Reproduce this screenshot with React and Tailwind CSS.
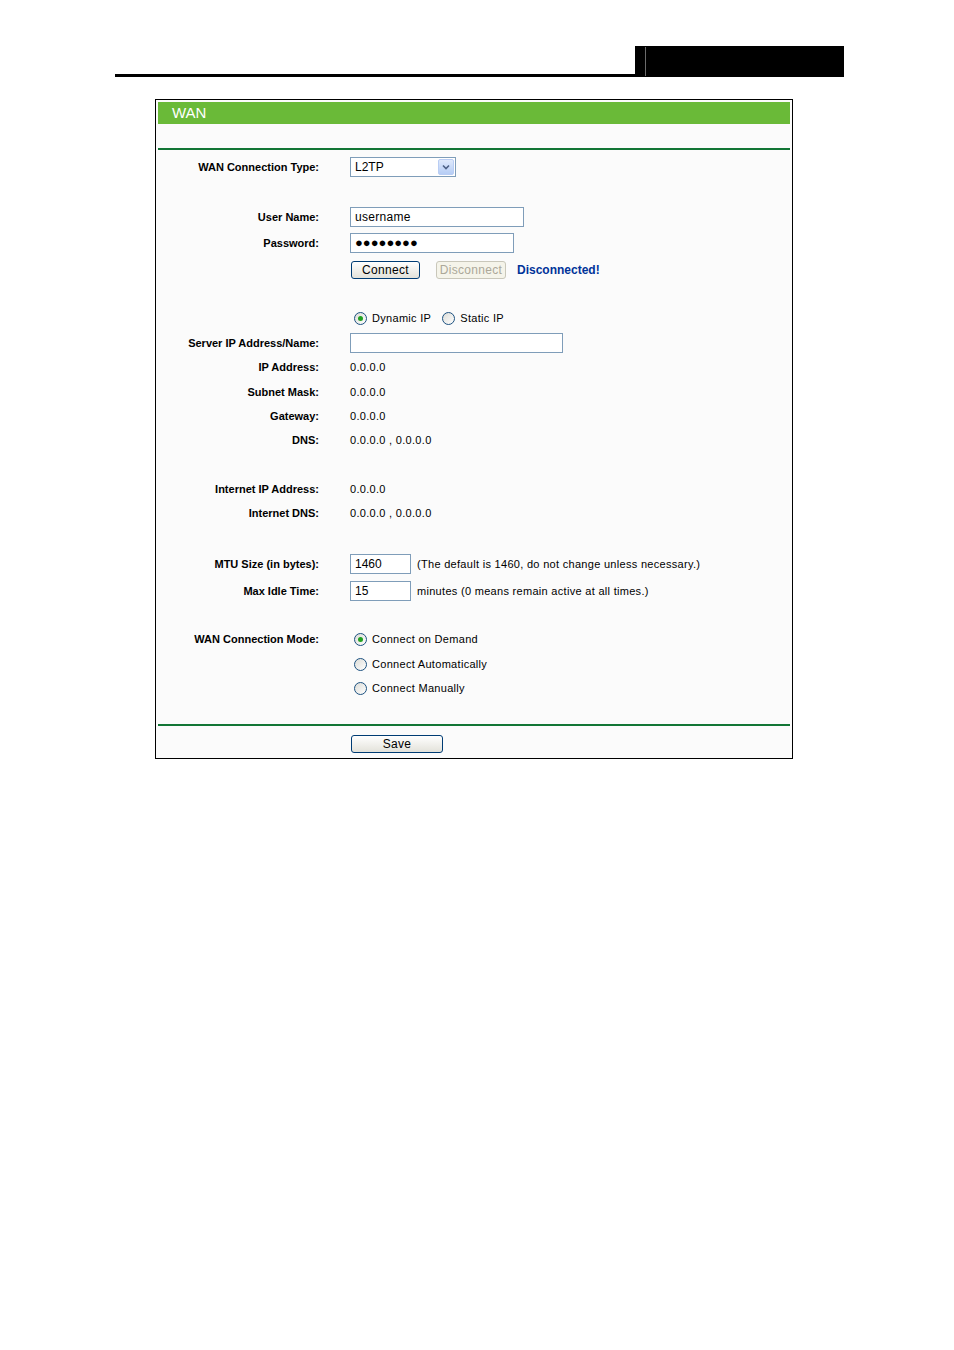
import React from 'react';

const font = { fontFamily: '"Liberation Sans", Arial, sans-serif' };

function Radio({ checked }) {
  return (
    <span className="w-[13px] h-[13px] rounded-full border border-[#1c5180] bg-gradient-to-br from-[#dcdcd7] to-white flex items-center justify-center">
      {checked && <span className="w-[5px] h-[5px] rounded-full bg-[#21a121]" />}
    </span>
  );
}

function Row({ label, h = 'h-[24px]', children }) {
  return (
    <div className={`flex items-center ${h}`}>
      <div className="w-[161px] text-right text-[11px] font-bold text-black whitespace-nowrap">{label}</div>
      <div className="ml-[31px] flex items-center text-[11px] tracking-[0.3px] text-black whitespace-nowrap">{children}</div>
    </div>
  );
}

function XpButton({ children, w, disabled }) {
  return (
    <button
      className={
        disabled
          ? `${w} h-[18px] rounded-[3px] border border-[#c9c7ba] bg-[#f5f4ea] text-[#aca899] text-[12px] leading-none`
          : `${w} h-[18px] rounded-[3px] border border-[#003c74] bg-gradient-to-b from-white to-[#e3e2da] text-black text-[12px] leading-none`
      }
      style={font}
    >
      {children}
    </button>
  );
}

export default function App() {
  return (
    <div className="min-h-screen bg-white" style={font}>
      {/* Page header */}
      <div className="flex items-end ml-[115px] w-[729px] pt-[46px]">
        <div className="flex-1 h-[3px] bg-black" />
        <div className="w-[209px] h-[31px] bg-black flex">
          <div className="w-[10px]" />
          <div className="w-px h-[29px] mt-px bg-[#6b6b6b]" />
        </div>
      </div>

      {/* WAN panel */}
      <div className="ml-[155px] mt-[22px] w-[638px] border border-black bg-[#fbfbfb] p-[2px] pb-[4px]">
        <div className="h-[22px] bg-[#6aba38] flex items-center pl-[14px]">
          <span className="text-white text-[15px]">WAN</span>
        </div>
        <div className="h-[24px]" />
        <div className="h-[2px] bg-[#127535]" />

        <div className="h-[5px]" />
        <Row label="WAN Connection Type:">
          <div className="w-[106px] h-[20px] border border-[#7f9db9] bg-white flex items-center">
            <span className="flex-1 pl-[4px] text-[12px] tracking-normal">L2TP</span>
            <span className="w-[16px] h-[16px] mr-px rounded-[2px] bg-gradient-to-b from-[#dfe9fb] to-[#b6cdf5] border border-[#b9cdf4] flex items-center justify-center">
              <svg width="8" height="6" viewBox="0 0 8 6"><path d="M1 1.5 L4 4.5 L7 1.5" fill="none" stroke="#4d6185" strokeWidth="1.6" /></svg>
            </span>
          </div>
        </Row>

        <div className="h-[26px]" />
        <Row label="User Name:">
          <div className="w-[174px] h-[20px] border border-[#7f9db9] bg-white flex items-center pl-[4px] text-[12px]">username</div>
        </Row>
        <div className="h-[2px]" />
        <Row label="Password:">
          <div className="w-[164px] h-[20px] border border-[#7f9db9] bg-white flex items-center pl-[4px] text-[13px] tracking-[0px]">●●●●●●●●</div>
        </Row>
        <div className="h-[3px]" />
        <Row label="">
          <div className="ml-px flex items-center">
            <XpButton w="w-[69px]">Connect</XpButton>
            <span className="w-[16px]" />
            <XpButton w="w-[70px]" disabled>Disconnect</XpButton>
            <span className="ml-[11px] text-[12px] font-bold text-[#003399] tracking-normal">Disconnected!</span>
          </div>
        </Row>

        <div className="h-[24px]" />
        <Row label="">
          <div className="ml-[4px] flex items-center">
            <Radio checked />
            <span className="ml-[5px]">Dynamic IP</span>
            <span className="ml-[11px]"><Radio /></span>
            <span className="ml-[5px]">Static IP</span>
          </div>
        </Row>
        <div className="h-px" />
        <Row label="Server IP Address/Name:">
          <div className="w-[213px] h-[20px] border border-[#7f9db9] bg-white" />
        </Row>
        <Row label="IP Address:" h="h-[25px]">0.0.0.0</Row>
        <Row label="Subnet Mask:">0.0.0.0</Row>
        <Row label="Gateway:">0.0.0.0</Row>
        <Row label="DNS:">0.0.0.0 , 0.0.0.0</Row>

        <div className="h-[25px]" />
        <Row label="Internet IP Address:">0.0.0.0</Row>
        <Row label="Internet DNS:">0.0.0.0 , 0.0.0.0</Row>

        <div className="h-[27px]" />
        <Row label="MTU Size (in bytes):">
          <div className="w-[61px] h-[20px] border border-[#7f9db9] bg-white flex items-center pl-[4px] text-[12px] tracking-normal">1460</div>
          <span className="ml-[6px]">(The default is 1460, do not change unless necessary.)</span>
        </Row>
        <div className="h-[3px]" />
        <Row label="Max Idle Time:">
          <div className="w-[61px] h-[20px] border border-[#7f9db9] bg-white flex items-center pl-[4px] text-[12px] tracking-normal">15</div>
          <span className="ml-[6px]">minutes (0 means remain active at all times.)</span>
        </Row>

        <div className="h-[24px]" />
        <Row label="WAN Connection Mode:">
          <div className="ml-[4px] flex items-center">
            <Radio checked />
            <span className="ml-[5px]">Connect on Demand</span>
          </div>
        </Row>
        <div className="h-px" />
        <Row label="">
          <div className="ml-[4px] flex items-center">
            <Radio />
            <span className="ml-[5px]">Connect Automatically</span>
          </div>
        </Row>
        <Row label="">
          <div className="ml-[4px] flex items-center">
            <Radio />
            <span className="ml-[5px]">Connect Manually</span>
          </div>
        </Row>

        <div className="h-[24px]" />
        <div className="h-[2px] bg-[#127535]" />
        <div className="h-[8px]" />
        <Row label="" h="h-[20px]">
          <div className="ml-px">
            <XpButton w="w-[92px]">Save</XpButton>
          </div>
        </Row>
      </div>
    </div>
  );
}
